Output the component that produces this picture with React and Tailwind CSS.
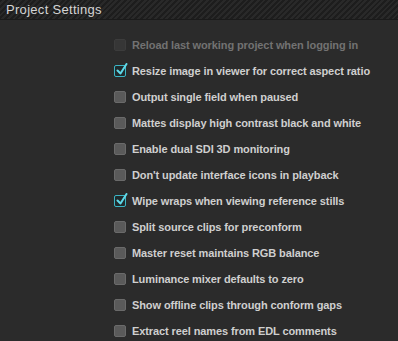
import React from "react";

const settings = [
  { label: "Reload last working project when logging in", checked: false, disabled: true },
  { label: "Resize image in viewer for correct aspect ratio", checked: true },
  { label: "Output single field when paused", checked: false },
  { label: "Mattes display high contrast black and white", checked: false },
  { label: "Enable dual SDI 3D monitoring", checked: false },
  { label: "Don't update interface icons in playback", checked: false },
  { label: "Wipe wraps when viewing reference stills", checked: true },
  { label: "Split source clips for preconform", checked: false },
  { label: "Master reset maintains RGB balance", checked: false },
  { label: "Luminance mixer defaults to zero", checked: false },
  { label: "Show offline clips through conform gaps", checked: false },
  { label: "Extract reel names from EDL comments", checked: false },
];

const CheckBox = ({ checked, disabled }) => {
  if (checked) {
    return (
      <span className="relative w-[12px] h-[12px] rounded-[2px] border border-[#3bb5c4] bg-[#1f2a2c] flex-shrink-0">
        <svg className="absolute left-[1px] top-[-3px]" width="12" height="13" viewBox="0 0 12 13">
          <path d="M1.5 7.5 L4.5 10.5 L10.5 1" fill="none" stroke="#5fd8e8" strokeWidth="2" strokeLinecap="round" strokeLinejoin="round" />
        </svg>
      </span>
    );
  }
  return (
    <span
      className={
        disabled
          ? "w-[12px] h-[12px] rounded-[2px] border border-[#3c3c3c] bg-[#363636] flex-shrink-0"
          : "w-[12px] h-[12px] rounded-[2px] border border-[#6a6a6a] bg-[#5a5a5a] flex-shrink-0"
      }
    />
  );
};

export default function App() {
  return (
    <div className="w-[398px] h-[341px] bg-[#2b2b2b] overflow-hidden font-['Liberation_Sans',Arial,sans-serif]">
      <div className="h-[20px] bg-[repeating-linear-gradient(135deg,#1d1d1d_0px,#1d1d1d_2px,#292929_2px,#292929_4px)] border-b border-[#1a1a1a] flex items-center px-[6px]">
        <span className="text-[13px] text-[#d4d4d4] leading-none tracking-[0.3px]">Project Settings</span>
      </div>
      <div className="pt-[12px] pl-[114px] flex flex-col">
        {settings.map((s) => (
          <div key={s.label} className="h-[26px] flex items-center gap-[6px]">
            <CheckBox checked={s.checked} disabled={s.disabled} />
            <span
              className={
                s.disabled
                  ? "text-[11px] font-bold text-[#727272] whitespace-nowrap tracking-[-0.1px]"
                  : "text-[11px] font-bold text-[#cfcfcf] whitespace-nowrap tracking-[-0.1px]"
              }
            >
              {s.label}
            </span>
          </div>
        ))}
      </div>
    </div>
  );
}
